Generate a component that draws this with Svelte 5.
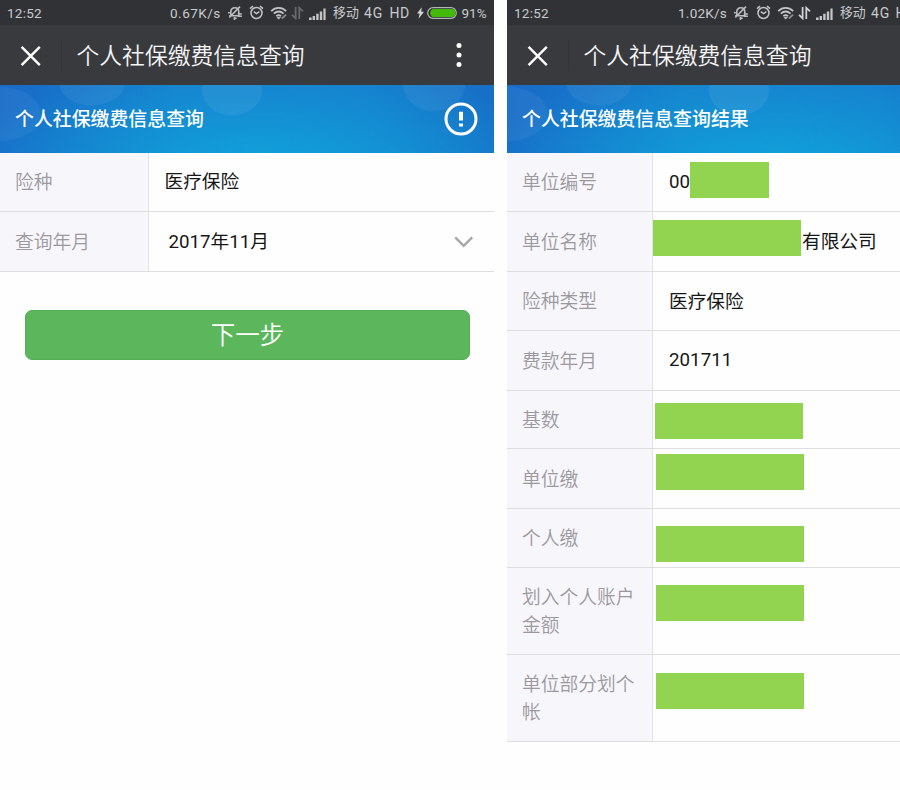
<script>
  const queryRows = [
    { label: '险种', value: '医疗保险', height: 59 },
    { label: '查询年月', value: '2017年11月', height: 60, select: true }
  ];
  const resultRows = [
    { label: '单位编号', value: '00', height: 59, numeric: true, mask: { x: 37, y: 9, w: 79 } },
    { label: '单位名称', value: '有限公司', height: 60, indent: 149, mask: { x: 0, y: 8, w: 148 } },
    { label: '险种类型', value: '医疗保险', height: 59 },
    { label: '费款年月', value: '201711', height: 60, numeric: true },
    { label: '基数', height: 58, mask: { x: 2, y: 12, w: 148 } },
    { label: '单位缴', height: 60, mask: { x: 3, y: 5, w: 148 } },
    { label: '个人缴', height: 59, mask: { x: 3, y: 17, w: 148 } },
    { label: '划入个人账户金额', height: 87, mask: { x: 3, y: 17, w: 148 } },
    { label: '单位部分划个帐', height: 87, mask: { x: 3.5, y: 17.5, w: 148 } }
  ];
</script>

{#snippet statusBar(speed, active)}
  <div class="status">
    <span class="time">12:52</span>
    <span class="speed">{speed}</span>
    <svg class="bell" width="17" height="17" viewBox="0 0 17 17" fill="none" stroke="#bbbcbd" stroke-width="1.6">
      <path d="M2.2 10.8h9.5M3.8 10.6V6.8C3.8 4.3 5.4 2.8 7.8 2.8c2.5 0 4 1.5 4 4v5M6.5 13.2h3.2M13 1.6L2.3 12.5M1 7.5l1.8.5M10.7 9h4.2M10.7 11.2h4.2M7.5 12v3" />
    </svg>
    <svg class="alarm" width="15" height="16" viewBox="0 0 15 16" fill="none" stroke="#c4c5c6" stroke-width="1.5">
      <circle cx="7.5" cy="8" r="5.5" /><path d="M1 3.6l3-2.4M14 3.6l-3-2.4M4.8 6.7l2.7 2 2.9-2" />
    </svg>
    <svg class="wifi" width="18" height="14" viewBox="0 0 18 14" fill="none" stroke="#c4c5c6" stroke-width="1.7">
      <path d="M1.2 5.1c4.4-4.2 10.6-4.2 15 0M3.8 7.7c3-2.7 6.8-2.7 9.8 0M6.3 10.1c1.5-1.3 3.3-1.3 4.8 0" />
      <path d="M7 11.2h3.4l-1.7 2z" fill="#c4c5c6" stroke-width=".7" />
      <path d="M11.8 12.6l4.2-4" stroke="#8a8c8e" stroke-width="2" />
    </svg>
    <svg class="transfer" class:active width="13" height="14" viewBox="0 0 13 14" fill="none" stroke="currentColor" stroke-width="1.8">
      <path d="M4.6 1v11.3L1 8.8M8.3 13V1.8L12 5.3" />
    </svg>
    <svg class="signal" width="17" height="12" viewBox="0 0 17 12" fill="#c4c5c6">
      <path d="M0 9.6h2.6V12H0zM3.6 8h2.4v4H3.6zM7.2 5.8h2.4V12H7.2zM10.8 3.4h2.4V12h-2.4zM14.4.5h2.2V12h-2.2z" />
    </svg>
    <span class="carrier">移动</span>
    <span class="network">4G</span>
    <span class="hd">HD</span>
    <svg class="bolt" width="7" height="12" viewBox="0 0 8 13" fill="#d4d5d6"><path d="M5.5 0L0 7.2h3L1.8 13 8 5H4.8z" /></svg>
    <svg class="battery" width="30" height="12" viewBox="0 0 30 12">
      <rect x=".7" y=".7" width="28.6" height="10.6" rx="5.3" fill="#27312a" stroke="#b1b7b2" stroke-width="1.2" />
      <path d="M5.5 2h19a4 4 0 010 8h-19a4.5 4.5 0 010-8z" fill="#45b90b" />
    </svg>
    <span class="percent">91%</span>
  </div>
{/snippet}

{#snippet titleBar()}
  <header>
    <svg class="close" width="22" height="22" viewBox="0 0 22 22" stroke="#fff" stroke-width="2.4"><path d="M1.6 1.8l18.2 18.4M19.8 1.8L1.6 20.2" /></svg>
    <i class="divider"></i>
    <h1>个人社保缴费信息查询</h1>
    <svg class="more" width="8" height="26" viewBox="0 0 8 26" fill="#fff"><circle cx="4" cy="3.4" r="2.5" /><circle cx="4" cy="13" r="2.5" /><circle cx="4" cy="22.6" r="2.5" /></svg>
  </header>
{/snippet}

<main>
  <section class="phone query">
    {@render statusBar('0.67K/s', false)}
    {@render titleBar()}
    <div class="banner">
      <h2>个人社保缴费信息查询</h2>
      <svg class="notice" width="34" height="34" viewBox="0 0 34 34" fill="none" stroke="#fff">
        <circle cx="17" cy="17" r="15" stroke-width="3" /><path d="M17 9.7v8.8M17 21.4v3.2" stroke-width="4" />
      </svg>
    </div>
    <div class="rows">
      {#each queryRows as row}
        <div class="row" style:height="{row.height}px">
          <div class="label">{row.label}</div>
          <div class="value" class:select={row.select}>
            <span class="text">{row.value}</span>
            {#if row.select}
              <svg class="chevron" width="20" height="12" viewBox="0 0 20 12" fill="none" stroke="#a7a7a7" stroke-width="2.4"><path d="M1.2 1.3l8.5 8.5 8.5-8.5" /></svg>
            {/if}
          </div>
        </div>
      {/each}
    </div>
    <button>下一步</button>
  </section>

  <section class="phone result">
    {@render statusBar('1.02K/s', true)}
    {@render titleBar()}
    <div class="banner"><h2>个人社保缴费信息查询结果</h2></div>
    <div class="rows">
      {#each resultRows as row}
        <div class="row" style:height="{row.height}px">
          <div class="label">{row.label}</div>
          <div class="value">
            {#if row.value}
              <span class="text" class:numeric={row.numeric} style:margin-left={row.indent ? `${row.indent - 16}px` : null}>{row.value}</span>
            {/if}
            {#if row.mask}
              <i class="mask" style:left="{row.mask.x}px" style:top="{row.mask.y}px" style:width="{row.mask.w}px"></i>
            {/if}
          </div>
        </div>
      {/each}
    </div>
  </section>
</main>

<style>
  :global(body) { background: #fefefe; overflow: hidden; }
  main {
    display: flex;
    gap: 12.6px;
    width: 900px;
    height: 790px;
    overflow: hidden;
    background: #fefefe;
    font-family: Roboto, "Noto Sans CJK SC", sans-serif;
  }
  .phone { flex: none; width: 494.4px; }
  h1, h2 { margin: 0; white-space: nowrap; }
  svg { flex: none; display: block; }

  .status {
    display: flex;
    align-items: center;
    height: 25px;
    padding-top: 1px;
    box-sizing: border-box;
    background: #303236;
    color: #c9cacb;
    font-size: 13.5px;
    white-space: nowrap;
  }
  .status span { flex: none; line-height: 24px; }
  .time { width: 163px; padding-left: 7px; letter-spacing: .25px; }
  .speed { width: 56.5px; letter-spacing: .5px; }
  .result .time { width: 164px; }
  .result .speed { width: 55.5px; letter-spacing: .25px; }
  .bell { margin-right: 5.5px; }
  .alarm { margin-right: 6px; }
  .wifi { margin-right: 3px; }
  .transfer { margin-right: 5px; color: #67696b; }
  .transfer.active { color: #d0d1d2; }
  .signal { margin-right: 7px; margin-top: 1px; }
  .carrier { width: 31px; font-size: 12.9px; }
  .network { width: 25.5px; letter-spacing: .8px; font-size: 14px; }
  .hd { width: 27.5px; font-size: 14px; letter-spacing: .5px; }
  .result .network { width: 24.5px; }
  .bolt { margin-right: 3px; }
  .battery { margin-right: 4.5px; }

  header {
    display: flex;
    align-items: center;
    height: 60px;
    background: #393a3e;
  }
  .close { margin: 1px 0 0 20px; }
  .divider { width: 1px; height: 31px; margin: 0 14.5px 0 19px; background: #333438; }
  h1 {
    flex: 1;
    color: #f5f5f5;
    font-size: 22.8px;
    font-weight: 350;
    line-height: 56px;
    padding-top: 4px;
  }
  .more { margin-right: 31.5px; }

  .banner {
    display: flex;
    align-items: center;
    justify-content: space-between;
    height: 68px;
    padding: 0 16.5px 0 15px;
    background:
      radial-gradient(ellipse 34px 24px at 92px -3px, #ffffff0e 94%, transparent),
      radial-gradient(ellipse 31px 26px at 232px 5px, #ffffff10 94%, transparent),
      radial-gradient(ellipse 32px 28px at 434px -1px, #ffffff0e 94%, transparent),
      radial-gradient(ellipse 42px 28px at 0 29px, #ffffff0c 94%, transparent),
      radial-gradient(ellipse 310px 115px at 260px 90px, #10a6dc 0, #10a3da90 45%, transparent 100%),
      linear-gradient(90deg, #186bc7, #177fcd 35%, #177ccd 75%, #176fc6);
  }
  .result .banner {
    background:
      radial-gradient(ellipse 34px 24px at 92px -3px, #ffffff0e 94%, transparent),
      radial-gradient(ellipse 31px 26px at 232px 5px, #ffffff10 94%, transparent),
      radial-gradient(ellipse 42px 28px at 0 29px, #ffffff0c 94%, transparent),
      radial-gradient(ellipse 310px 115px at 270px 90px, #10a6dc 0, #10a3da90 45%, transparent 100%),
      linear-gradient(90deg, #186bc7, #177fcd 35%, #177ccd 75%, #176fc6);
  }
  h2 {
    color: #fff;
    font-size: 18.9px;
    font-weight: 500;
    line-height: 66px;
    padding-top: 2px;
  }

  .row {
    display: flex;
    box-sizing: border-box;
    border-bottom: 1px solid #dedee1;
  }
  .label {
    display: flex;
    align-items: center;
    flex: none;
    box-sizing: border-box;
    width: 149px;
    padding: 2px 15px 0;
    border-right: 1px solid #e2e1e5;
    background: #f7f6fb;
    color: #9b999e;
    font-size: 18.75px;
    font-weight: 350;
    line-height: 28px;
  }
  .result .label { width: 146px; }
  .value {
    position: relative;
    display: flex;
    align-items: center;
    flex: 1;
    padding-left: 16px;
    color: #161616;
    font-size: 18.7px;
    white-space: nowrap;
  }
  .value.select { padding-left: 19.5px; }
  .query .value { padding-left: 15.5px; }
  .query .value.select { padding-left: 19.5px; }
  .text { padding-bottom: 4px; }
  .query .row:first-child .text { padding-bottom: 5px; }
  .numeric { padding-bottom: 1px; letter-spacing: .05px; }
  .chevron { margin: 0 20px 0 auto; }
  .mask { position: absolute; height: 36px; background: #92d350; }

  button {
    display: block;
    width: 445px;
    height: 50px;
    margin: 38px 0 0 25px;
    padding: 2px 0 0;
    border: 1px solid #54ae56;
    border-radius: 7px;
    background: #5cb75c;
    color: #fff;
    font: 350 24.5px/46px Roboto, "Noto Sans CJK SC", sans-serif;
  }
</style>
